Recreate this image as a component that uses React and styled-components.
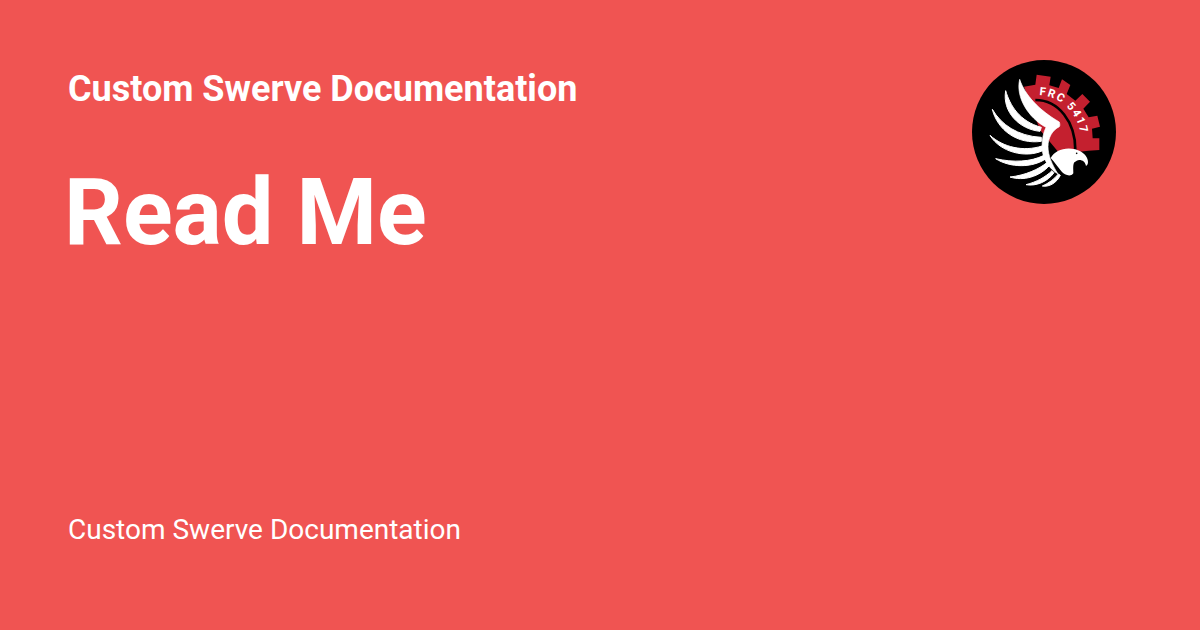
import styled, { createGlobalStyle } from "styled-components";

const Global = createGlobalStyle`
  html, body {
    margin: 0;
    padding: 0;
  }
  body {
    background: #f05452;
    font-family: Roboto, "Liberation Sans", sans-serif;
  }
`;

const Card = styled.div`
  width: 1200px;
  height: 630px;
  box-sizing: border-box;
  padding: 60px 84px 80px 68px;
  display: flex;
  flex-direction: column;
  background: #f05452;
  color: #fff;
  overflow: hidden;
`;

const Top = styled.div`
  display: flex;
  justify-content: space-between;
  align-items: flex-start;
`;

const Heading = styled.div`
  display: flex;
  flex-direction: column;
`;

const SiteName = styled.div`
  font-size: 36px;
  font-weight: 700;
  line-height: 58px;
`;

const Title = styled.h1`
  margin: 41px 0 0 -4px;
  font-size: 92px;
  font-weight: 700;
  line-height: 108px;
`;

const Description = styled.div`
  margin-top: auto;
  font-size: 28px;
  line-height: 40px;
`;

const LogoSvg = styled.svg`
  width: 144px;
  height: 144px;
  flex: none;
  display: block;
`;

const feathers = [
  "M137 122 C150 166 178 214 244 232 L240 244 C178 238 126 186 137 122 Z",
  "M97 178 C124 224 172 258 244 262 L244 274 C172 284 112 240 97 178 Z",
  "M90 256 C130 292 190 306 246 288 L248 302 C196 326 120 306 90 256 Z",
  "M107 326 C160 338 212 336 252 316 L258 326 C218 354 150 354 107 326 Z",
  "M150 381 C196 376 236 358 262 337 L268 347 C238 380 190 394 150 381 Z",
  "M198 404 C230 396 258 380 276 362 L282 368 C264 394 228 410 198 404 Z",
  "M247 408 C266 400 284 386 295 372 L301 376 C290 398 268 412 247 408 Z",
];

const Logo = () => (
  <LogoSvg viewBox="36 30 432 432">
    <circle cx="252" cy="246" r="216" fill="#000" />
    {/* gear with its teeth */}
    <path
      fill="#c4202f"
      d="M192 110 L226 104 L230 74 L272 80 L268 106 L296 114 L306 88 L331 105 L320 132 L346 152 L367 132 L390 155 L370 176 L386 202 L412 197 L420 230 L396 236 L398 265 L418 265 L418 300 L385 302 L300 312 L240 240 Z"
    />
    {/* black ring inside the gear */}
    <path
      fill="none"
      stroke="#000"
      strokeWidth="8"
      d="M226 150 C296 150 346 216 346 300"
    />
    {/* top feather running into the shoulder */}
    <path
      fill="#fff"
      stroke="#fff"
      strokeWidth="2"
      strokeLinejoin="round"
      d="M179 88 C194 134 236 180 298 216 C300 222 300 228 298 230 C278 240 264 262 264 290 C264 316 276 344 294 372 C266 354 246 326 246 290 C246 268 250 248 258 232 C206 204 166 142 179 88 Z"
    />
    {feathers.map((d) => (
      <path key={d} fill="#fff" stroke="#fff" strokeWidth="3" strokeLinejoin="round" d={d} />
    ))}
    {/* head and beak */}
    <path
      fill="#fff"
      d="M272 324 C284 302 314 290 346 298 C368 304 384 320 384 336 C384 342 382 346 378 348 C376 336 368 330 358 330 C352 330 348 334 344 336 C338 342 340 356 340 370 C332 382 314 376 304 364 C294 352 284 336 272 324 Z"
    />
    <circle cx="350" cy="310" r="2.5" fill="#000" />
    <path id="gearArc" fill="none" d="M238 136 C304 136 360 196 364 268" />
    <text
      fill="#fff"
      fontFamily="Roboto, sans-serif"
      fontWeight="700"
      fontSize="34"
      letterSpacing="4.5"
    >
      <textPath href="#gearArc">FRC 5417</textPath>
    </text>
  </LogoSvg>
);

const App = () => (
  <>
    <Global />
    <Card>
      <Top>
        <Heading>
          <SiteName>Custom Swerve Documentation</SiteName>
          <Title>Read Me</Title>
        </Heading>
        <Logo />
      </Top>
      <Description>Custom Swerve Documentation</Description>
    </Card>
  </>
);

export default App;
